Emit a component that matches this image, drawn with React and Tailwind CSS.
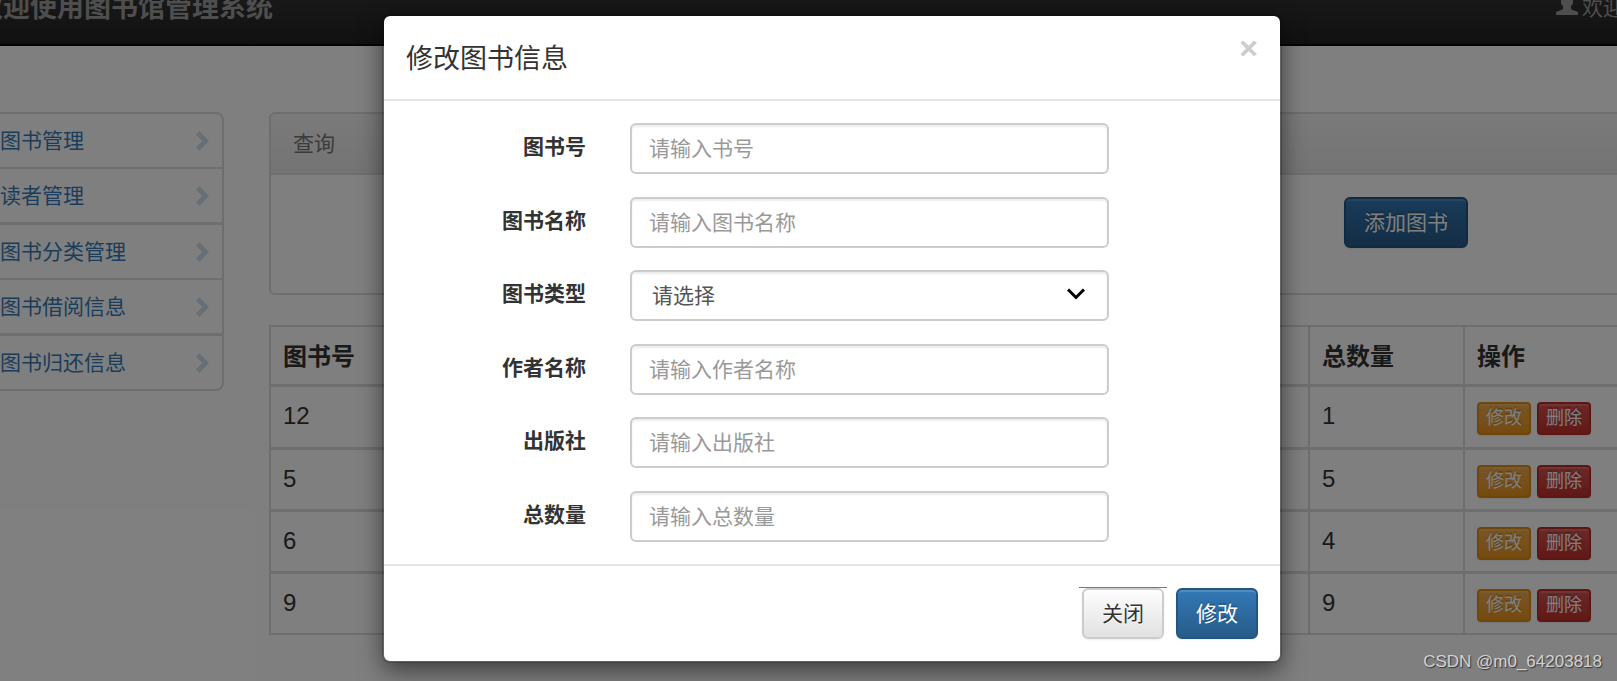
import clsx from 'clsx';

const menuItems = [
  { label: '图书管理', border: 'border-b-2' },
  { label: '读者管理', border: 'border-b-3' },
  { label: '图书分类管理', border: 'border-b-2' },
  { label: '图书借阅信息', border: 'border-b-3' },
  { label: '图书归还信息', border: '' },
];

const books = [
  { id: 12, total: 1 },
  { id: 5, total: 5 },
  { id: 6, total: 4 },
  { id: 9, total: 9 },
];

const fields = [
  { id: 'bookId', label: '图书号', placeholder: '请输入书号' },
  { id: 'bookName', label: '图书名称', placeholder: '请输入图书名称' },
  { id: 'bookType', label: '图书类型', options: ['请选择'] },
  { id: 'author', label: '作者名称', placeholder: '请输入作者名称' },
  { id: 'press', label: '出版社', placeholder: '请输入出版社' },
  { id: 'total', label: '总数量', placeholder: '请输入总数量' },
];

const buttonStyles = {
  primary:
    'text-white border-[#245580] bg-linear-to-b from-[#337ab7] to-[#265a88] text-shadow-[0_-2px_0_rgba(0,0,0,0.2)] shadow-[inset_0_2px_0_rgba(255,255,255,0.15),0_1px_2px_rgba(0,0,0,0.075)]',
  default:
    'text-[#333] border-[#ccc] bg-linear-to-b from-white to-[#e0e0e0] text-shadow-[0_1px_0_#fff] shadow-[inset_0_2px_0_rgba(255,255,255,0.15),0_1px_2px_rgba(0,0,0,0.075)]',
  warning:
    'text-white border-[#e38d13] bg-linear-to-b from-[#f0ad4e] to-[#eb9316] text-shadow-[0_-2px_0_rgba(0,0,0,0.2)] shadow-[inset_0_2px_0_rgba(255,255,255,0.15),0_1px_2px_rgba(0,0,0,0.075)]',
  danger:
    'text-white border-[#b92c28] bg-linear-to-b from-[#d9534f] to-[#c12e2a] text-shadow-[0_-2px_0_rgba(0,0,0,0.2)] shadow-[inset_0_2px_0_rgba(255,255,255,0.15),0_1px_2px_rgba(0,0,0,0.075)]',
};

function Button({ variant = 'default', small = false, className, children }) {
  return (
    <button
      type="button"
      className={clsx(
        'border-2 whitespace-nowrap bg-origin-border',
        small
          ? 'h-[33px] rounded-[4px] px-[7px] text-lg leading-[27px]'
          : 'h-[51px] rounded-md px-[18px] text-[21px] leading-[30px]',
        buttonStyles[variant],
        className,
      )}
    >
      {children}
    </button>
  );
}

function ChevronRight() {
  return (
    <svg viewBox="0 0 13 20" className="h-5 w-[13px] text-[#337ab7]/25" fill="currentColor" aria-hidden="true">
      <path d="M0 3.5 3.4.3 13 10l-9.600 9.700L0 16.500 6.300 10z" />
    </svg>
  );
}

function UserIcon() {
  return (
    <svg viewBox="0 0 22 22" className="h-[22px] w-[22px]" fill="currentColor" aria-hidden="true">
      <path d="M11 0C7.500 0 5 2 5 5v4.500c0 1.500.8 2.700 2 3.500v2.500c0 .6-.4 1-1 1.200L1.200 18.500C.4 18.800 0 19.200 0 20v2h22v-2c0-.8-.4-1.200-1.200-1.500L16 16.700c-.6-.2-1-.6-1-1.200V13c1.200-.8 2-2 2-3.500V5c0-3-2.500-5-6-5z" />
    </svg>
  );
}

function Navbar() {
  return (
    <nav className="flex h-[78px] items-center justify-between border-b-2 border-[#080808] bg-linear-to-b from-[#3c3c3c] to-[#222] pt-[3px] pr-[17px] text-[#9d9d9d]">
      <a href="#" className="text-[27px] leading-[30px] font-bold">
        欢迎使用图书馆管理系统
      </a>
      <a href="#" className="flex items-start gap-1 text-[21px] leading-[30px]">
        <UserIcon />
        欢迎
      </a>
    </nav>
  );
}

function Sidebar() {
  return (
    <ul className="w-[248px] shrink-0 self-start rounded-lg border-2 border-[#ddd] bg-white">
      {menuItems.map((item) => (
        <li key={item.label} className={clsx('border-[#ddd]', item.border)}>
          <a
            href="#"
            className="flex h-[53px] items-center justify-between pr-[13px] pl-[22px] text-[21px] leading-[30px] text-[#337ab7]"
          >
            {item.label}
            <ChevronRight />
          </a>
        </li>
      ))}
    </ul>
  );
}

function SearchPanel() {
  return (
    <section className="rounded-md border-2 border-[#ddd] bg-white">
      <h2 className="rounded-t-[4px] border-b-2 border-[#ddd] bg-linear-to-b from-[#f5f5f5] to-[#e8e8e8] px-[22px] py-[15px] text-[21px] leading-[29px] text-[#777]">
        查询
      </h2>
      <div className="p-[22px]">
        <div className="mb-[23px] flex justify-end pr-[149px]">
          <Button variant="primary">添加图书</Button>
        </div>
      </div>
    </section>
  );
}

function BookTable() {
  return (
    <table className="mt-[30px] w-full table-fixed border-separate border-spacing-0 border-t-2 border-[#ddd] text-left text-2xl leading-[34px] text-[#333]">
      <thead>
        <tr className="[&>th]:pt-[13px] [&>th]:pb-[10px]">
          <th className="w-[160px] border-b-3 border-l-2 border-[#ddd] px-3 font-bold">图书号</th>
          <th className="border-b-3 border-[#ddd]" />
          <th className="w-[155px] border-b-3 border-l-2 border-[#ddd] px-3 font-bold">总数量</th>
          <th className="w-[178px] border-b-3 border-l-2 border-[#ddd] px-3 font-bold">操作</th>
        </tr>
      </thead>
      <tbody className="[&>tr:first-child>td]:pb-3 [&>tr:last-child>td]:border-b-2">
        {books.map((book) => (
          <tr key={book.id} className="align-top">
            <td className="border-b-3 border-l-2 border-[#ddd] px-3 pt-3">{book.id}</td>
            <td className="border-b-3 border-[#ddd]" />
            <td className="border-b-3 border-l-2 border-[#ddd] px-3 pt-3">{book.total}</td>
            <td className="border-b-3 border-l-2 border-[#ddd] px-3 pt-[15px] pb-[11px]">
              <div className="flex gap-[6px]">
                <Button variant="warning" small>修改</Button>
                <Button variant="danger" small>删除</Button>
              </div>
            </td>
          </tr>
        ))}
      </tbody>
    </table>
  );
}

function FormField({ field }) {
  const control =
    'block h-[51px] w-full rounded-md border-2 border-[#ccc] bg-white text-[21px] text-[#555] shadow-[inset_0_2px_2px_rgba(0,0,0,0.075)] outline-none placeholder:text-[#999]';

  return (
    <div className="grid grid-cols-12 odd:mb-[23px] even:mb-[22px]">
      <label
        htmlFor={field.id}
        className="col-span-3 pt-[9px] pr-[22px] text-right text-[21px] leading-[30px] font-bold"
      >
        {field.label}
      </label>
      <div className="col-span-7 px-[22px]">
        {field.options ? (
          <div className="relative">
            <select id={field.id} className={clsx(control, 'appearance-none pr-12 pl-5')}>
              {field.options.map((option) => (
                <option key={option}>{option}</option>
              ))}
            </select>
            <svg
              viewBox="0 0 18 12"
              className="pointer-events-none absolute top-[18px] right-6 h-3 w-[18px]"
              fill="none"
              stroke="#000"
              strokeWidth="3"
              aria-hidden="true"
            >
              <path d="m1 1.500 8 8 8-8" />
            </svg>
          </div>
        ) : (
          <input id={field.id} type="text" placeholder={field.placeholder} className={clsx(control, 'px-[17px]')} />
        )}
      </div>
    </div>
  );
}

function EditModal() {
  return (
    <div className="absolute inset-0 z-20 pt-[14px] pl-[47px]">
      <div
        role="dialog"
        aria-labelledby="modalTitle"
        className="mx-auto w-full max-w-[900px] rounded-lg border-2 border-black/20 bg-white bg-clip-padding text-[#333] shadow-[0_8px_23px_rgba(0,0,0,0.5)]"
      >
        <header className="flex items-start justify-between border-b-2 border-[#e5e5e5] px-[22px] pt-[22px] pb-[18px]">
          <h4 id="modalTitle" className="text-[27px] leading-[43px]">
            修改图书信息
          </h4>
          <button type="button" aria-label="关闭" className="h-5 text-[32px] leading-5 font-bold text-[#ccc]">
            ×
          </button>
        </header>
        <form className="pt-[22px]">
          {fields.map((field) => (
            <FormField key={field.id} field={field} />
          ))}
        </form>
        <footer className="flex justify-end gap-3 border-t-2 border-[#e5e5e5] p-[22px]">
          {/* resto del contorno de foco sobre el botón de cierre */}
          <Button className="relative before:absolute before:-inset-x-[5px] before:-top-[3px] before:h-px before:bg-[#777]">
            关闭
          </Button>
          <Button variant="primary">修改</Button>
        </footer>
      </div>
    </div>
  );
}

export default function App() {
  return (
    <div className="relative min-h-screen overflow-hidden bg-white font-['Liberation_Sans','Noto_Sans_CJK_SC',sans-serif]">
      <div className="-mx-6 -mt-8">
        <Navbar />
        <main className="flex gap-[45px] pt-[66px]">
          <Sidebar />
          <div className="min-w-0 flex-1">
            <SearchPanel />
            <BookTable />
          </div>
        </main>
      </div>

      <div className="absolute inset-0 z-10 bg-black/50" />
      <EditModal />

      <p className="absolute right-[15px] bottom-[7px] z-30 text-[17px] leading-6 text-[#d2d2d2] text-shadow-[1px_1px_1px_rgba(0,0,0,0.6)]">
        CSDN @m0_64203818
      </p>
    </div>
  );
}
